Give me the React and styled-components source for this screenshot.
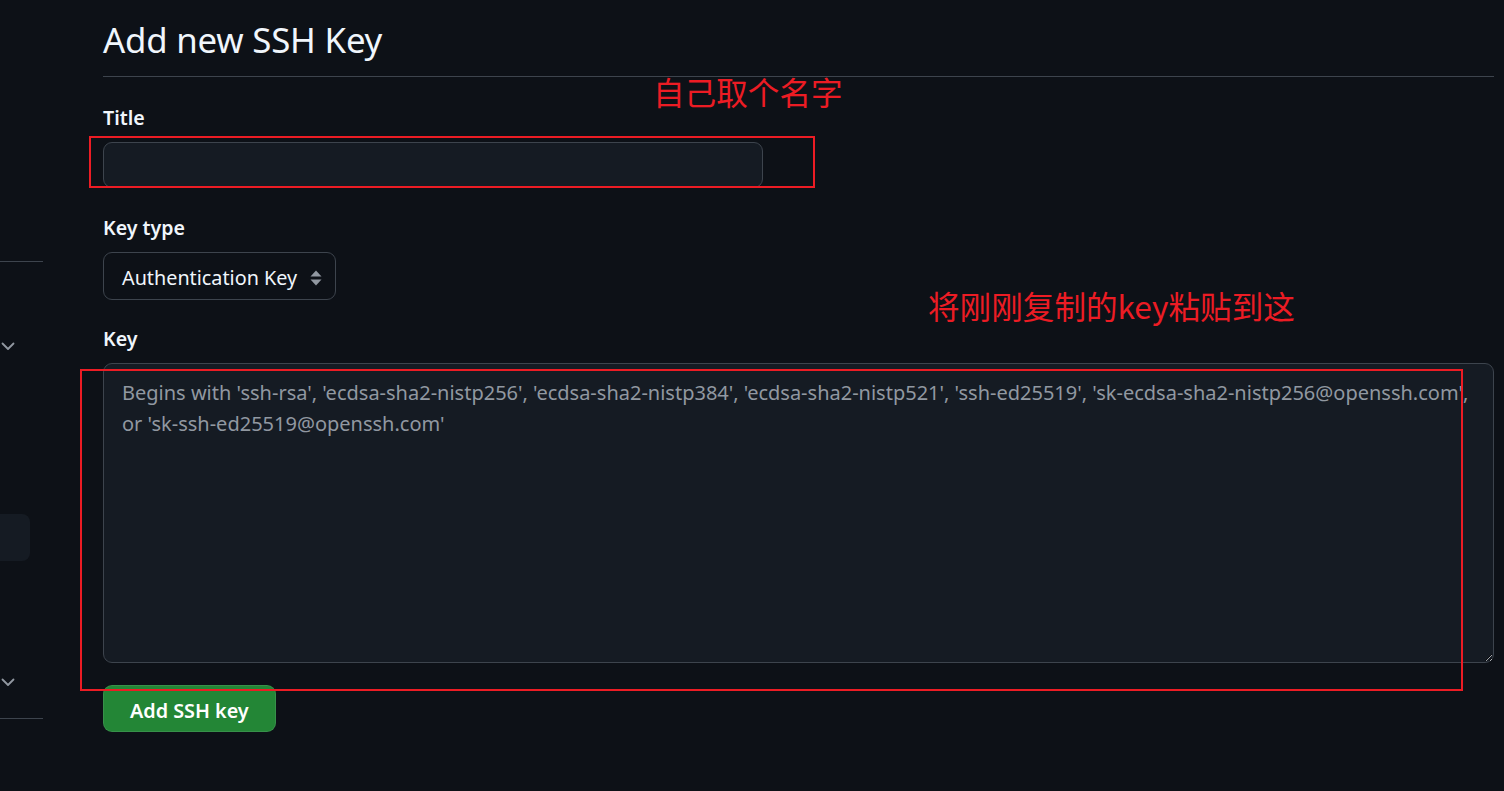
import React from "react"
import styled, { createGlobalStyle } from "styled-components"

const GlobalStyle = createGlobalStyle`
  html, body {
    margin: 0;
    padding: 0;
    background: #0d1117;
    color: #f0f6fc;
    font-family: "Noto Sans", "Open Sans", "Noto Sans CJK SC", sans-serif;
  }
  * { box-sizing: border-box; }
`

const Page = styled.div`
  position: relative;
  display: flex;
  width: 1504px;
  height: 791px;
  overflow: hidden;
`

const Sidebar = styled.nav`
  width: 43px;
  flex-shrink: 0;
  margin-right: 60px;
  display: flex;
  flex-direction: column;
`

const SideRule = styled.div`
  height: 1px;
  background: #3d444d;
  margin-top: ${p => p.$top}px;
`

const SideChevron = styled.div`
  height: 16px;
  margin-top: ${p => p.$top}px;
  color: #9198a1;
  display: flex;
  align-items: center;
`

const SideActive = styled.div`
  width: 31px;
  height: 47px;
  margin-top: ${p => p.$top}px;
  margin-left: -1px;
  border-radius: 0 8px 8px 0;
  background: #151b23;
`

const Main = styled.main`
  flex: 1;
  padding-right: 10px;
  display: flex;
  flex-direction: column;
`

const Heading = styled.h2`
  margin: 0;
  padding: 18px 0 14px;
  font-size: 34.8px;
  font-weight: 400;
  line-height: 44px;
  border-bottom: 1px solid #3d444d;
  letter-spacing: -0.2px;
`

const Group = styled.div`
  display: flex;
  flex-direction: column;
  align-items: flex-start;
  margin-top: ${p => p.$top}px;
`

const Label = styled.label`
  font-size: 19.6px;
  font-weight: 600;
  line-height: 28px;
  margin-bottom: 10px;
`

const TextInput = styled.input`
  width: 660px;
  height: 46px;
  padding: 0 18px;
  border: 1px solid #3d444d;
  border-radius: 9px;
  background: #151b23;
  color: #f0f6fc;
  font: inherit;
  font-size: 19.6px;
  outline: none;
`

const SelectBox = styled.div`
  display: flex;
  align-items: center;
  gap: 12px;
  height: 48px;
  padding: 3px 12px 0 18px;
  border: 1px solid #3d444d;
  border-radius: 9px;
  background: #0d1117;
  font-size: 19.8px;
  line-height: 1;
`

const KeyArea = styled.textarea`
  width: 100%;
  height: 300px;
  padding: 14px 18px;
  border: 1px solid #3d444d;
  border-radius: 9px;
  background: #151b23;
  color: #f0f6fc;
  font: inherit;
  font-size: 20px;
  line-height: 30.5px;
  color-scheme: dark;
  outline: none;
  resize: vertical;
  &::placeholder { color: #9198a1; }
`

const SubmitButton = styled.button`
  margin-top: 22px;
  align-self: flex-start;
  height: 47px;
  padding: 3px 26px 0;
  border: 1px solid rgba(240, 246, 252, 0.1);
  border-radius: 9px;
  background: #238636;
  color: #fff;
  font: inherit;
  font-size: 19.8px;
  font-weight: 600;
`

const Annotation = styled.div`
  position: absolute;
  left: ${p => p.$x}px;
  top: ${p => p.$y}px;
  width: ${p => p.$w}px;
  height: ${p => p.$h}px;
  border: 2px solid #ec1c24;
  pointer-events: none;
`

const Note = styled.div`
  position: absolute;
  left: ${p => p.$x}px;
  top: ${p => p.$y}px;
  color: #ec1c24;
  font-family: "Noto Sans CJK SC", "Noto Sans", sans-serif;
  font-size: 31.6px;
  line-height: 1;
  white-space: nowrap;
`

const Chevron = () => (
  <svg width="16" height="16" viewBox="0 0 16 16" fill="none">
    <path d="M2.5 5.5 8 11l5.5-5.5" stroke="currentColor" strokeWidth="1.8" strokeLinecap="round" strokeLinejoin="round" />
  </svg>
)

const UpDown = () => (
  <svg width="14" height="18" viewBox="0 0 14 18" fill="#9198a1">
    <path d="M7 1.5 12.5 7.5h-11z" />
    <path d="M7 16.5 1.5 10.5h11z" />
  </svg>
)

const placeholder =
  "Begins with 'ssh-rsa', 'ecdsa-sha2-nistp256', 'ecdsa-sha2-nistp384', 'ecdsa-sha2-nistp521', 'ssh-ed25519', 'sk-ecdsa-sha2-nistp256@openssh.com', or 'sk-ssh-ed25519@openssh.com'"

export default function App() {
  return (
    <>
      <GlobalStyle />
      <Page>
        <Sidebar>
          <SideRule $top={261} />
          <SideChevron $top={76}><Chevron /></SideChevron>
          <SideActive $top={160} />
          <SideChevron $top={113}><Chevron /></SideChevron>
          <SideRule $top={28} />
        </Sidebar>

        <Main>
          <Heading>Add new SSH Key</Heading>

          <Group $top={27}>
            <Label>Title</Label>
            <TextInput type="text" />
          </Group>

          <Group $top={26}>
            <Label>Key type</Label>
            <SelectBox>
              <span>Authentication Key</span>
              <UpDown />
            </SelectBox>
          </Group>

          <Group $top={25}>
            <Label>Key</Label>
            <KeyArea placeholder={placeholder} />
          </Group>

          <SubmitButton>Add SSH key</SubmitButton>
        </Main>

        <Annotation $x={89} $y={136} $w={726} $h={52} />
        <Annotation $x={80} $y={369} $w={1383} $h={322} />
        <Note $x={653} $y={76}>自己取个名字</Note>
        <Note $x={928} $y={290}>将刚刚复制的key粘贴到这</Note>
      </Page>
    </>
  )
}
